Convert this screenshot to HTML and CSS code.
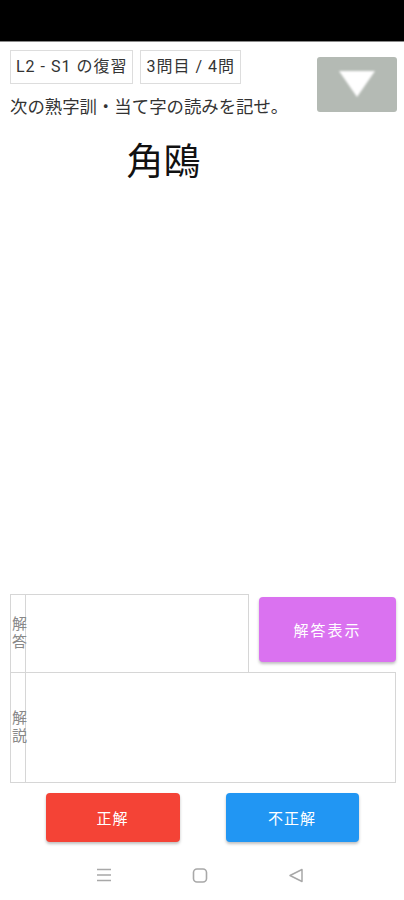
FILE: index.html
```html
<!DOCTYPE html>
<html lang="ja">
<head>
    <meta charset="UTF-8">
    <meta name="viewport" content="width=device-width, initial-scale=1.0">
    <title>熟字訓の復習</title>
    <link rel="stylesheet" href="styles.css">
</head>
<body>
    <div class="screen">
        <div class="status"></div>

        <div class="top">
            <div class="left">
                <div class="tags">
                    <span class="tag">L2 - S1 の復習</span>
                    <span class="tag">3問目 / 4問</span>
                </div>
                <p class="prompt">次の熟字訓・当て字の読みを記せ。</p>
                <p class="question">角鴎</p>
            </div>
            <button class="toggle" aria-label="開く">
                <svg width="40" height="30" viewBox="0 0 40 30">
                    <defs>
                        <filter id="soft"><feGaussianBlur stdDeviation="1.2" /></filter>
                    </defs>
                    <polygon points="2,2 38,2 20,28" fill="#fff" filter="url(#soft)" />
                </svg>
            </button>
        </div>

        <div class="answer-row">
            <div class="box answer">
                <div class="label">解答</div>
                <div class="field"></div>
            </div>
            <button class="btn show">解答表示</button>
        </div>
        <div class="box explain">
            <div class="label">解説</div>
            <div class="field"></div>
        </div>

        <div class="judge">
            <button class="btn correct">正解</button>
            <button class="btn wrong">不正解</button>
        </div>

        <div class="navbar">
            <svg width="16" height="14" viewBox="0 0 16 14">
                <path d="M1 1.5h14M1 7h14M1 12.5h14" stroke="#a8a8a8" stroke-width="1.6" fill="none" />
            </svg>
            <svg width="16" height="15" viewBox="0 0 16 15">
                <rect x="1.5" y="1" width="13" height="13" rx="3.5" stroke="#a8a8a8" stroke-width="1.6" fill="none" />
            </svg>
            <svg width="16" height="15" viewBox="0 0 16 15">
                <path d="M14 1.5v12L2 7.5z" stroke="#a8a8a8" stroke-width="1.5" stroke-linejoin="round" fill="none" />
            </svg>
        </div>
    </div>
</body>
</html>
```

FILE: styles.css
```css
body {
    margin: 0;
    font-family: Roboto, "Noto Sans CJK JP", sans-serif;
    color: #333;
    background-color: #fff;
}
.screen {
    width: 404px;
    height: 900px;
    display: flex;
    flex-direction: column;
}
.status {
    height: 41px;
    background-color: #000;
    border-bottom: 1px solid #8a8a8a;
}
.top {
    flex: 1;
    display: flex;
    align-items: flex-start;
    padding: 8px 7px 0 10px;
}
.left {
    flex: 1;
}
.tags {
    display: flex;
    gap: 7px;
}
.tag {
    height: 32px;
    line-height: 32px;
    padding: 0 5px;
    border: 1px solid #ddd;
    font-size: 16px;
    letter-spacing: 1px;
    color: #333;
}
.prompt {
    margin: 11px 0 0;
    font-size: 17.4px;
    line-height: 24px;
}
.question {
    margin: 20px 0 0;
    text-align: center;
    font-size: 37px;
    line-height: 48px;
    color: #111;
}
.toggle {
    width: 80px;
    height: 55px;
    margin-top: 7px;
    padding: 0;
    border: none;
    border-radius: 3px;
    background-color: #b4bab4;
    display: flex;
    align-items: center;
    justify-content: center;
}
.toggle svg {
    margin-top: -2px;
}
.answer-row {
    display: flex;
    align-items: flex-start;
    gap: 10px;
    padding: 0 8px 0 10px;
}
.box {
    display: flex;
    border: 1px solid #d6d6d6;
}
.answer {
    width: 237px;
    height: 77px;
}
.explain {
    height: 109px;
    margin: -1px 8px 0 10px;
}
.label {
    width: 14px;
    border-right: 1px solid #d6d6d6;
    writing-mode: vertical-rl;
    text-orientation: upright;
    display: flex;
    justify-content: center;
    align-items: center;
    font-size: 15px;
    line-height: 14px;
    letter-spacing: 3px;
    color: #888;
}
.field {
    flex: 1;
}
.btn {
    border: none;
    border-radius: 4px;
    color: #fff;
    font-family: inherit;
    font-size: 15px;
    letter-spacing: 1px;
    box-shadow: 0 2px 3px rgba(0, 0, 0, 0.25);
}
.show {
    width: 137px;
    height: 65px;
    margin-top: 3px;
    background-color: #da72f0;
    letter-spacing: 2px;
}
.judge {
    display: flex;
    justify-content: center;
    gap: 46px;
    margin-top: 10px;
}
.correct {
    width: 134px;
    height: 49px;
    background-color: #f44336;
}
.wrong {
    width: 133px;
    height: 49px;
    background-color: #2196f3;
}
.navbar {
    height: 58px;
    padding: 8px 4px 0 0;
    box-sizing: border-box;
    display: flex;
    align-items: center;
    justify-content: center;
    gap: 80px;
}
```
